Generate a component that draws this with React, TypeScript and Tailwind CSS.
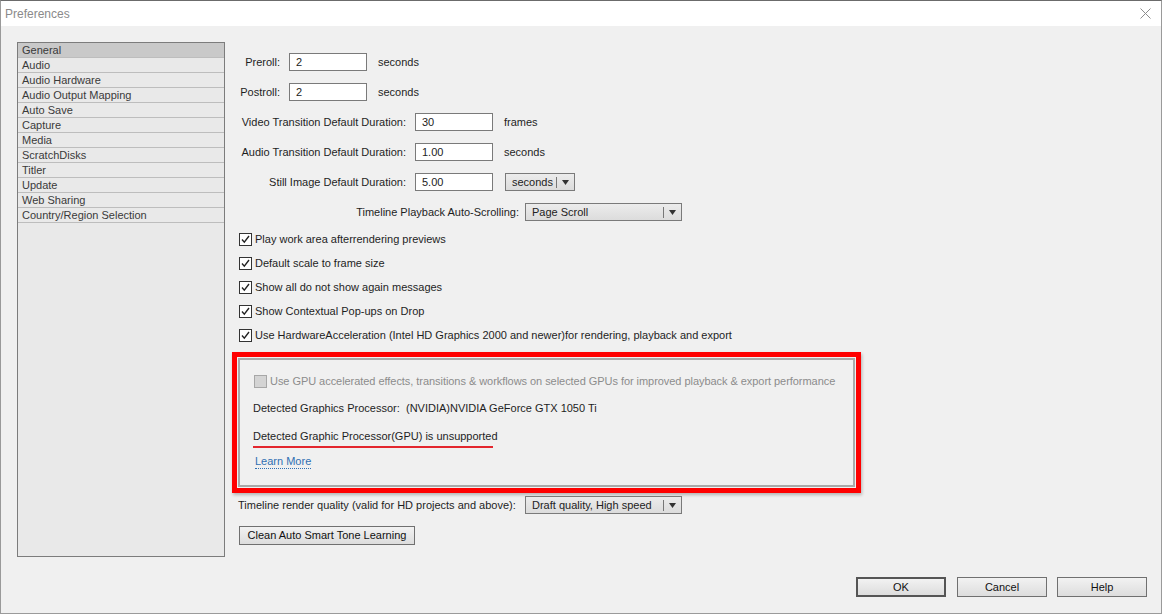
import React from 'react'

const font = { fontFamily: '"Liberation Sans", Arial, sans-serif' }

const categories = [
  'General',
  'Audio',
  'Audio Hardware',
  'Audio Output Mapping',
  'Auto Save',
  'Capture',
  'Media',
  'ScratchDisks',
  'Titler',
  'Update',
  'Web Sharing',
  'Country/Region Selection',
]

const checks = [
  'Play work area afterrendering previews',
  'Default scale to frame size',
  'Show all do not show again messages',
  'Show Contextual Pop-ups on Drop',
  'Use HardwareAcceleration (Intel HD Graphics 2000 and newer)for rendering, playback and export',
]

function TextInput({ value }: { value: string }) {
  return (
    <div className="flex h-[18px] w-[78px] items-center border border-[#7a7a7a] bg-white pl-[6px] text-[11px] text-[#222]">
      {value}
    </div>
  )
}

function Arrow() {
  return (
    <svg width="7" height="5" viewBox="0 0 7 5" className="shrink-0">
      <path d="M0 0h7L3.5 5z" fill="#333" />
    </svg>
  )
}

function Dropdown({ label, width }: { label: string; width: string }) {
  return (
    <div
      className={`flex h-[18px] ${width} items-center border border-[#7a7a7a] bg-gradient-to-b from-[#ececec] to-[#dcdcdc] pl-[6px] pr-[5px] text-[11px] text-[#222]`}
    >
      <span className="flex-1">{label}</span>
      <span className="mr-[5px] h-[11px] w-px bg-[#777]" />
      <Arrow />
    </div>
  )
}

function CheckBox({ checked, disabled }: { checked?: boolean; disabled?: boolean }) {
  if (disabled) {
    return <div className="h-[13px] w-[13px] shrink-0 border border-[#a7a7a7] bg-[#d4d4d4]" />
  }
  return (
    <div className="flex h-[13px] w-[13px] shrink-0 items-center justify-center border border-[#333] bg-white">
      {checked && (
        <svg width="9" height="9" viewBox="0 0 9 9">
          <path d="M1 4.5l2.3 2.6L8 1" fill="none" stroke="#222" strokeWidth="1.4" />
        </svg>
      )}
    </div>
  )
}

function Button({ children, width, primary }: { children: React.ReactNode; width: string; primary?: boolean }) {
  return (
    <div
      className={`flex h-[20px] ${width} items-center justify-center bg-gradient-to-b from-[#f2f2f2] to-[#dddddd] text-[11px] text-[#111] ${
        primary ? 'border-2 border-[#555]' : 'border border-[#707070]'
      }`}
    >
      {children}
    </div>
  )
}

export default function App() {
  return (
    <div
      className="flex h-[614px] w-[1162px] flex-col overflow-hidden border border-t-[#6b6b6b] border-x-[#9a9a9a] border-b-[#9a9a9a] bg-[#f0f0f0]"
      style={font}
    >
      {/* title bar */}
      <div className="flex h-[25px] shrink-0 items-center justify-between bg-white pl-[4px] pr-[10px]">
        <span className="text-[12px] text-[#8a8a8a]">Preferences</span>
        <svg width="11" height="11" viewBox="0 0 11 11">
          <path d="M0.5 0.5l10 10M10.5 0.5l-10 10" stroke="#8d8d8d" strokeWidth="1" />
        </svg>
      </div>

      <div className="flex flex-1 flex-col pl-[16px] pr-[14px] pt-[16px]">
        <div className="flex">
          {/* category list */}
          <div className="h-[515px] w-[208px] shrink-0 border border-[#7c7c7c] bg-[#e9e9e9]">
            {categories.map((c, i) => (
              <div
                key={c}
                className={`flex h-[15px] items-center border-b border-[#bdbdbd] pl-[4px] text-[11px] text-[#3a3a3a] ${
                  i === 0 ? 'bg-[#c9c9c9]' : ''
                }`}
              >
                {c}
              </div>
            ))}
          </div>

          {/* settings */}
          <div className="ml-[7px] flex flex-col pt-[5px] text-[11px] text-[#1e1e1e]">
            <div className="flex h-[30px] items-center">
              <span className="ml-[6px] w-[42px] text-right">Preroll:</span>
              <div className="ml-[9px]"><TextInput value="2" /></div>
              <span className="ml-[11px]">seconds</span>
            </div>
            <div className="flex h-[30px] items-center">
              <span className="ml-[6px] w-[42px] text-right">Postroll:</span>
              <div className="ml-[9px]"><TextInput value="2" /></div>
              <span className="ml-[11px]">seconds</span>
            </div>
            <div className="flex h-[30px] items-center">
              <span className="ml-[6px] w-[168px] text-right">Video Transition Default Duration:</span>
              <div className="ml-[9px]"><TextInput value="30" /></div>
              <span className="ml-[11px]">frames</span>
            </div>
            <div className="flex h-[30px] items-center">
              <span className="ml-[6px] w-[168px] text-right">Audio Transition Default Duration:</span>
              <div className="ml-[9px]"><TextInput value="1.00" /></div>
              <span className="ml-[11px]">seconds</span>
            </div>
            <div className="flex h-[30px] items-center">
              <span className="ml-[6px] w-[168px] text-right">Still Image Default Duration:</span>
              <div className="ml-[9px]"><TextInput value="5.00" /></div>
              <div className="ml-[12px]"><Dropdown label="seconds" width="w-[70px]" /></div>
            </div>
            <div className="flex h-[30px] items-center">
              <span className="ml-[6px] w-[281px] text-right">Timeline Playback Auto-Scrolling:</span>
              <div className="ml-[6px]"><Dropdown label="Page Scroll" width="w-[157px]" /></div>
            </div>

            {checks.map((t) => (
              <div key={t} className="flex h-[24px] items-center pl-[7px]">
                <CheckBox checked />
                <span className="ml-[3px]">{t}</span>
              </div>
            ))}

            {/* highlighted GPU section */}
            <div className="mt-[5px] h-[141px] w-[629px] border-[5px] border-[#ff0000] p-px shadow-[1px_2px_3px_rgba(0,0,0,0.25)]">
              <div className="flex h-full flex-col border-2 border-[#a9a9a9] bg-[#f0f0f0]">
                <div className="mt-[11px] flex h-[20px] items-center pl-[14px]">
                  <CheckBox disabled />
                  <span className="ml-[3px] tracking-[-0.05px] text-[#8c8c8c]">
                    Use GPU accelerated effects, transitions &amp; workflows on selected GPUs for improved playback &amp; export performance
                  </span>
                </div>
                <div className="mt-[7px] flex h-[20px] items-center pl-[13px]">
                  <span className="w-[153px]">Detected Graphics Processor:</span>
                  <span>(NVIDIA)NVIDIA GeForce GTX 1050 Ti</span>
                </div>
                <div className="mt-[8px] flex h-[20px] items-center pl-[13px]">
                  <span>Detected Graphic Processor(GPU) is unsupported</span>
                </div>
                <div className="ml-[13px] h-[2px] w-[240px] bg-[#e3262e]" />
                <div className="mt-[4px] flex h-[20px] items-center pl-[15px]">
                  <span className="border-b border-dotted border-[#2f6fb3] leading-[13px] text-[#2f6fb3]">Learn More</span>
                </div>
              </div>
            </div>

            <div className="mt-[3px] flex h-[18px] items-center">
              <span className="ml-[6px] w-[287px]">Timeline render quality (valid for HD projects and above):</span>
              <Dropdown label="Draft quality, High speed" width="w-[157px]" />
            </div>

            <div className="ml-[7px] mt-[12px] flex h-[19px] w-[176px] items-center justify-center border border-[#707070] bg-gradient-to-b from-[#f2f2f2] to-[#dddddd] text-[11px] text-[#111]">
              Clean Auto Smart Tone Learning
            </div>
          </div>
        </div>

        {/* dialog buttons */}
        <div className="mt-[20px] flex justify-end">
          <Button width="w-[90px]" primary>OK</Button>
          <div className="ml-[11px]"><Button width="w-[90px]">Cancel</Button></div>
          <div className="ml-[10px]"><Button width="w-[90px]">Help</Button></div>
        </div>
      </div>
    </div>
  )
}
